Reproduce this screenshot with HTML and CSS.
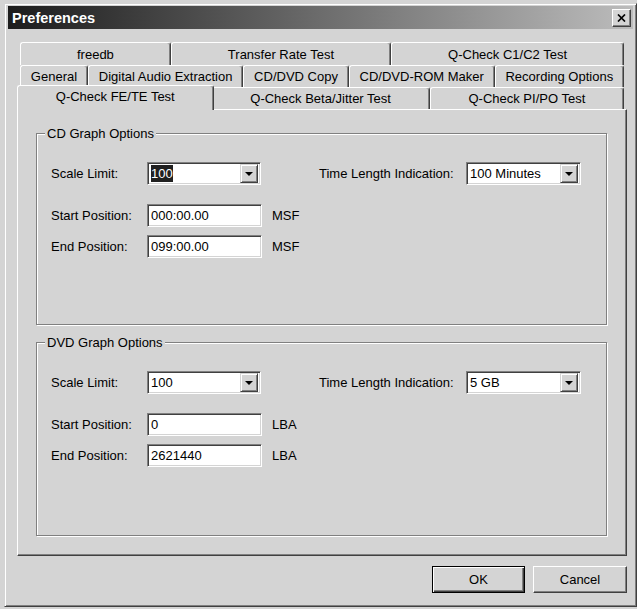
FILE: index.html
```html
<!DOCTYPE html>
<html lang="en">
<head>
    <meta charset="UTF-8">
    <title>Preferences</title>
    <link rel="stylesheet" href="styles.css">
</head>
<body>

    <div class="window">
        <div class="titlebar">
            <span class="title">Preferences</span>
            <button class="close-btn">
                <svg width="9" height="8" viewBox="0 0 9 8">
                    <path d="M1 0.5 L8 7.5 M8 0.5 L1 7.5" stroke="#000" stroke-width="1.7" fill="none"/>
                </svg>
            </button>
        </div>

        <div class="content">
            <div class="tabs">
                <div class="tab-row row-1">
                    <div class="tab">freedb</div>
                    <div class="tab">Transfer Rate Test</div>
                    <div class="tab">Q-Check C1/C2 Test</div>
                </div>
                <div class="tab-row row-2">
                    <div class="tab">General</div>
                    <div class="tab">Digital Audio Extraction</div>
                    <div class="tab">CD/DVD Copy</div>
                    <div class="tab">CD/DVD-ROM Maker</div>
                    <div class="tab">Recording Options</div>
                </div>
                <div class="tab-row row-3">
                    <div class="tab active">Q-Check FE/TE Test</div>
                    <div class="tab">Q-Check Beta/Jitter Test</div>
                    <div class="tab">Q-Check PI/PO Test</div>
                </div>
            </div>

            <div class="panel">
                <div class="group">
                    <span class="group-title">CD Graph Options</span>
                    <div class="row">
                        <label class="field-label">Scale Limit:</label>
                        <div class="combo">
                            <span class="combo-text"><span class="selected">100</span></span>
                            <span class="drop-btn"><span class="arrow"></span></span>
                        </div>
                        <label class="field-label time-label">Time Length Indication:</label>
                        <div class="combo combo-wide">
                            <span class="combo-text">100 Minutes</span>
                            <span class="drop-btn"><span class="arrow"></span></span>
                        </div>
                    </div>
                    <div class="row row-start">
                        <label class="field-label">Start Position:</label>
                        <div class="textbox">000:00.00</div>
                        <span class="unit">MSF</span>
                    </div>
                    <div class="row row-end">
                        <label class="field-label">End Position:</label>
                        <div class="textbox">099:00.00</div>
                        <span class="unit">MSF</span>
                    </div>
                </div>

                <div class="group group-dvd">
                    <span class="group-title">DVD Graph Options</span>
                    <div class="row">
                        <label class="field-label">Scale Limit:</label>
                        <div class="combo">
                            <span class="combo-text">100</span>
                            <span class="drop-btn"><span class="arrow"></span></span>
                        </div>
                        <label class="field-label time-label">Time Length Indication:</label>
                        <div class="combo combo-wide">
                            <span class="combo-text">5 GB</span>
                            <span class="drop-btn"><span class="arrow"></span></span>
                        </div>
                    </div>
                    <div class="row row-start">
                        <label class="field-label">Start Position:</label>
                        <div class="textbox">0</div>
                        <span class="unit">LBA</span>
                    </div>
                    <div class="row row-end">
                        <label class="field-label">End Position:</label>
                        <div class="textbox">2621440</div>
                        <span class="unit">LBA</span>
                    </div>
                </div>
            </div>

            <div class="buttons">
                <button class="btn btn-default">OK</button>
                <button class="btn">Cancel</button>
            </div>
        </div>
    </div>

</body>
</html>
```

FILE: styles.css
```css
body {
    margin: 0;
    background-color: #d4d4d4;
    font-family: "Liberation Sans", Arial, sans-serif;
    font-size: 13px;
    color: #000;
}

.window {
    box-sizing: border-box;
    width: 633px;
    height: 604px;
    margin: 3px 0 0 4px;
    padding: 2px 3px 3px 3px;
    background-color: #d4d4d4;
    border: 1px solid;
    border-color: #d4d4d4 #404040 #404040 #d4d4d4;
    box-shadow: inset 1px 1px #fff, inset -1px -1px #808080;
}

.titlebar {
    height: 23px;
    display: flex;
    align-items: center;
    justify-content: space-between;
    padding: 0 2px 0 4px;
    background: linear-gradient(to right, #1c1c1c, #bcbcbc);
}

.title {
    color: #fff;
    font-weight: bold;
    font-size: 14.5px;
}

.close-btn {
    box-sizing: border-box;
    width: 19px;
    height: 18px;
    padding: 0;
    display: flex;
    align-items: center;
    justify-content: center;
    background-color: #d4d4d4;
    border: 1px solid;
    border-color: #fff #404040 #404040 #fff;
    box-shadow: inset -1px -1px #808080;
}

.content {
    padding: 13px 6px 0 9px;
}

/* tab strip */
.tab-row {
    display: flex;
    margin-left: 3px;
    width: 604px;
    height: 22px;
}

.row-1 {
    height: 23px;
}

.row-3 {
    margin-left: 2px;
    width: 605px;
}

.tab {
    flex: 1 1 auto;
    box-sizing: border-box;
    padding: 0 9px;
    display: flex;
    align-items: center;
    justify-content: center;
    white-space: nowrap;
    background-color: #d4d4d4;
    border-top: 1px solid #fff;
    border-left: 1px solid #fff;
    border-right: 1px solid #404040;
    border-radius: 3px 3px 0 0;
    box-shadow: inset -1px 0 #808080;
}

.tab.active {
    position: relative;
    z-index: 1;
    height: 25px;
    margin: -2px -2px 0 -2px;
    padding-bottom: 3px;
}

.panel {
    box-sizing: border-box;
    height: 447px;
    padding: 23px 19px 0 18px;
    border: 1px solid;
    border-color: #fff #404040 #404040 #fff;
    box-shadow: inset -1px -1px #808080;
}

/* group boxes */
.group {
    position: relative;
    box-sizing: border-box;
    height: 192px;
    padding: 28px 0 0 14px;
    border: 1px solid #808080;
    box-shadow: inset 1px 1px #fff, 1px 1px #fff;
}

.group-dvd {
    margin-top: 17px;
    height: 194px;
}

.group-title {
    position: absolute;
    top: -8px;
    left: 8px;
    padding: 0 2px;
    background-color: #d4d4d4;
}

.row {
    display: flex;
    align-items: center;
    height: 23px;
}

.row-start {
    margin-top: 19px;
}

.row-end {
    margin-top: 8px;
}

.field-label {
    width: 96px;
}

.time-label {
    width: 147px;
    margin-left: 58px;
}

.combo,
.textbox {
    box-sizing: border-box;
    width: 114px;
    height: 23px;
    background-color: #fff;
    border: 1px solid;
    border-color: #808080 #fff #fff #808080;
    box-shadow: inset 1px 1px #404040, inset -1px -1px #d4d4d4;
}

.combo {
    display: flex;
    align-items: center;
    padding: 2px;
}

.combo-wide {
    width: 115px;
}

.combo-text {
    flex: 1;
    padding-left: 1px;
    white-space: nowrap;
}

.selected {
    background-color: #202020;
    color: #fff;
    padding: 1px 0;
}

.drop-btn {
    box-sizing: border-box;
    width: 18px;
    height: 19px;
    display: flex;
    align-items: center;
    justify-content: center;
    background-color: #d4d4d4;
    border: 1px solid;
    border-color: #d4d4d4 #404040 #404040 #d4d4d4;
    box-shadow: inset 1px 1px #fff, inset -1px -1px #808080;
}

.arrow {
    width: 0;
    height: 0;
    border-left: 4px solid transparent;
    border-right: 4px solid transparent;
    border-top: 4px solid #000;
}

.textbox {
    width: 115px;
    padding: 3px 0 0 3px;
}

.unit {
    margin-left: 10px;
}

/* dialog buttons */
.buttons {
    display: flex;
    justify-content: flex-end;
    gap: 8px;
    margin-top: 10px;
}

.btn {
    box-sizing: border-box;
    width: 94px;
    height: 27px;
    padding: 0;
    font-family: "Liberation Sans", Arial, sans-serif;
    font-size: 13px;
    color: #000;
    background-color: #d4d4d4;
    border: 1px solid;
    border-color: #fff #404040 #404040 #fff;
    box-shadow: inset -1px -1px #808080;
}

.btn-default {
    width: 93px;
    border-color: #000;
    box-shadow: inset 1px 1px #fff, inset -1px -1px #404040, inset -2px -2px #808080;
}
```
